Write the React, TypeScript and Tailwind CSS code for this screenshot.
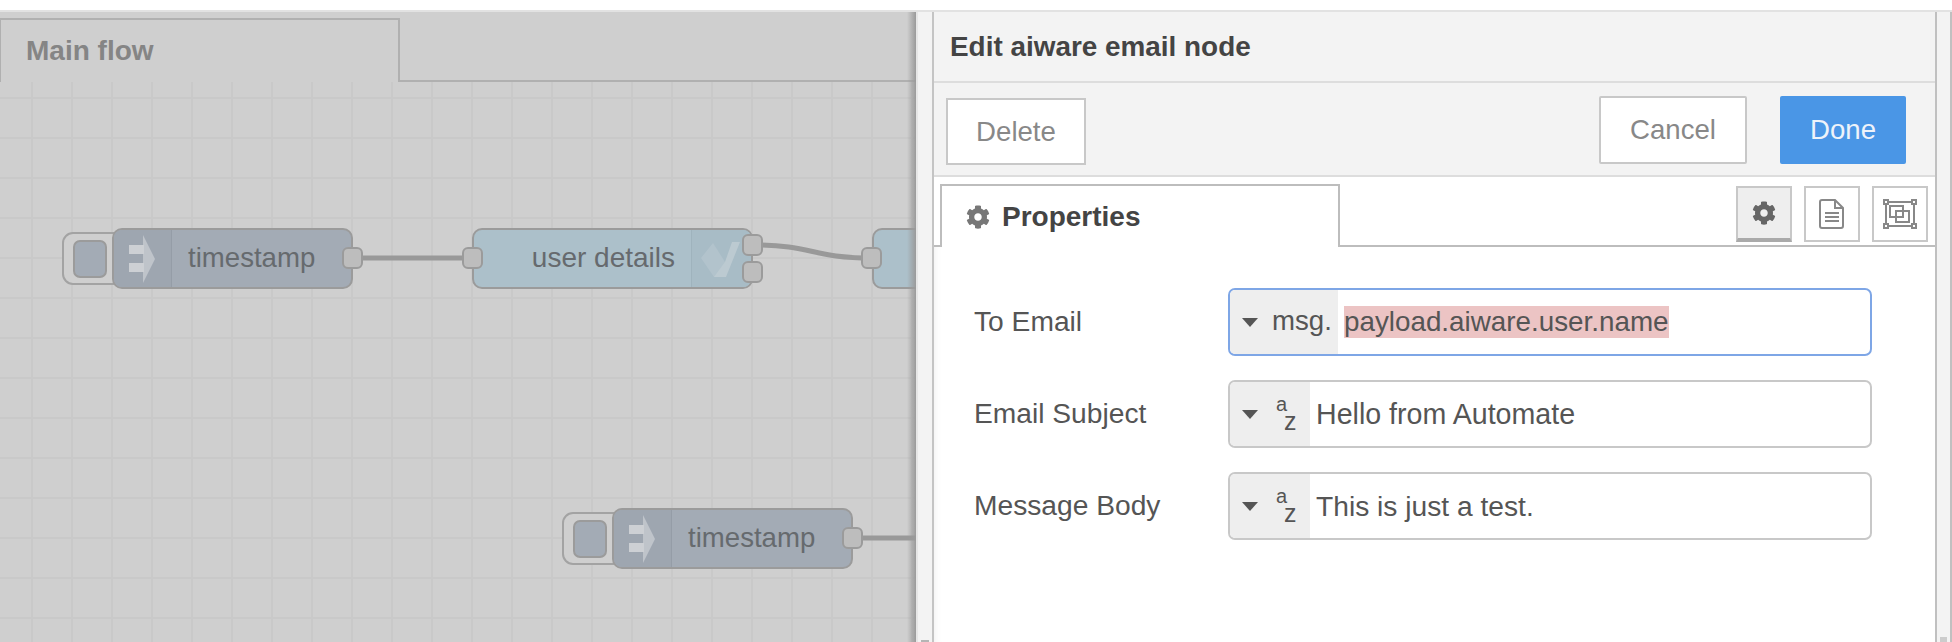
import { FaCog } from "react-icons/fa";

const font = "font-['Liberation_Sans',Arial,sans-serif]";

function InjectIcon() {
  return (
    <svg width="26" height="48" viewBox="0 0 26 48" className="block">
      <path d="M14 0l12 24-12 24z" fill="#bfc4ca" />
      <path d="M0 10h15v9H0zM0 28h15v9H0z" fill="#cdd0d4" />
    </svg>
  );
}

function Port({ className }: { className: string }) {
  return <div className={`absolute w-[21px] h-[22px] rounded-[6px] bg-[#bdbdbd] border-2 border-[#9b9b9b] ${className}`} />;
}

// Inject node with the little button on its left
function TimestampNode({ className }: { className: string }) {
  return (
    <div className={`absolute w-[300px] h-[61px] ${className}`}>
      <div className="absolute left-0 top-[4px] w-[60px] h-[53px] rounded-l-[11px] border-2 border-[#a3a3a3] bg-[#cfcfcf] flex items-center pl-[9px]">
        <div className="w-[34px] h-[38px] rounded-[7px] border-2 border-[#9b9b9b] bg-[#a3abb5]" />
      </div>
      <div className="absolute left-[50px] top-0 w-[241px] h-[61px] rounded-[10px] border-2 border-[#9b9b9b] bg-[#a3abb5] flex overflow-hidden">
        <div className="w-[58px] shrink-0 bg-[#9ea6b0] border-r border-[#959da7] flex items-center pl-[15px]">
          <InjectIcon />
        </div>
        <div className="flex-1 pl-[16px] leading-[56px] text-[27.6px] text-[#666a6e]">timestamp</div>
      </div>
      <Port className="left-[280px] top-[19px]" />
    </div>
  );
}

function TypedInput({ type, value, focused, size }: { type: string; value: string; focused?: boolean; size: string }) {
  return (
    <div className={`flex h-[68px] w-[644px] rounded-[7px] border-2 overflow-hidden bg-white ${focused ? "border-[#7ea6e6]" : "border-[#c8c8c8]"}`}>
      <div className={`flex items-center bg-[#eeeeee] shrink-0 pl-[12px] ${type === "msg" ? "w-[108px]" : "w-[80px]"}`}>
        <div className="w-0 h-0 border-x-[8px] border-x-transparent border-t-[9px] border-t-[#555555]" />
        {type === "msg" ? (
          <span className="ml-[14px] text-[27.6px] text-[#555555] -mt-[2px]">msg.</span>
        ) : (
          <span className="relative ml-[18px] w-[22px] h-[40px] text-[#555555] text-[20px] leading-none">
            <span className="absolute left-0 top-0">a</span>
            <span className="absolute left-[8px] top-[15px] text-[25px]">z</span>
          </span>
        )}
      </div>
      <div className={`flex items-center pl-[6px] text-[#555555] ${size}`}>
        {focused ? <span className="bg-[#ecc4c4] h-[32px] leading-[32px]">{value}</span> : <span>{value}</span>}
      </div>
    </div>
  );
}

function FormRow({ label, children }: { label: string; children: React.ReactNode }) {
  return (
    <div className="flex items-center">
      <div className="w-[294px] pl-[40px] text-[28.2px] text-[#555555] -mt-[2px]">{label}</div>
      {children}
    </div>
  );
}

export default function App() {
  return (
    <div className={`w-[1952px] h-[642px] overflow-hidden bg-white ${font}`}>
      <div className="h-[10px]" />
      <div className="flex h-[632px] border-t-2 border-[#e2e2e2]">
        {/* workspace */}
        <div className="relative w-[916px] shrink-0 overflow-hidden bg-[#cfcfcf]">
          <div className="h-[70px] pt-[6px] flex border-b-2 border-[#b0b0b0]">
            <div className="w-[400px] h-[64px] -mb-[2px] pl-[25px] border-2 border-b-0 border-l border-[#b0b0b0] bg-[#cfcfcf] text-[28px] font-bold text-[#858585] leading-[62px] relative z-10">
              Main flow
            </div>
          </div>
          <div className="relative h-[560px] bg-[linear-gradient(to_right,#c9c9c9_2px,transparent_2px),linear-gradient(to_bottom,#c9c9c9_2px,transparent_2px)] bg-[size:40px_40px] bg-[position:31px_15px]">
            <svg className="absolute left-0 top-0" width="916" height="560" fill="none" stroke="#999999" strokeWidth="5">
              <path d="M352 176H472" />
              <path d="M752 163C815 163 810 176 872 176" />
              <path d="M852 456H916" />
            </svg>
            {/* user details node */}
            <div className="absolute left-[472px] top-[146px] w-[281px] h-[61px] rounded-[10px] border-2 border-[#9b9b9b] bg-[#acc0ca] flex overflow-hidden">
              <div className="flex-1 text-right pr-[16px] leading-[56px] text-[28px] text-[#666a6e]">user details</div>
              <div className="relative w-[60px] shrink-0 bg-[#a8bcc6] border-l border-[#9fb3bd]">
                <svg width="40" height="40" viewBox="0 0 40 40" className="absolute left-[8px] top-[8px]">
                  <path d="M1 20L13 5l12 19v15H14z" fill="#b2c3cc" />
                  <path d="M25 24l7-20h8L26 39H14z" fill="#bccad1" />
                </svg>
              </div>
            </div>
            <div className="absolute left-[872px] top-[146px] w-[100px] h-[61px] rounded-[10px] border-2 border-[#9b9b9b] bg-[#acc0ca]" />
            <TimestampNode className="left-[62px] top-[146px]" />
            <TimestampNode className="left-[562px] top-[426px]" />
            <Port className="left-[462px] top-[165px]" />
            <Port className="left-[742px] top-[152px]" />
            <Port className="left-[742px] top-[179px]" />
            <Port className="left-[861px] top-[165px]" />
            <div className="absolute right-0 top-0 bottom-0 w-[9px] bg-gradient-to-r from-transparent to-[#9a9a9a]" />
          </div>
          <div className="absolute right-0 top-0 h-[70px] w-[9px] z-20 bg-gradient-to-r from-transparent to-[#9a9a9a]" />
        </div>

        {/* left resize strip */}
        <div className="relative w-[18px] shrink-0 bg-[#f3f3f3] border-l-2 border-r-2 border-l-[#e6e6e6] border-r-[#c4c4c4]">
          <div className="absolute left-[3px] bottom-0 w-[8px] h-[2px] bg-[#b5b5b5]" />
        </div>

        {/* edit dialog */}
        <div className="w-[1001px] shrink-0 flex flex-col">
          <div className="h-[71px] shrink-0 bg-[#f3f3f3] border-b-2 border-[#dddddd] pl-[16px] flex items-center text-[27.9px] font-bold text-[#444444]">
            Edit aiware email node
          </div>
          <div className="h-[94px] shrink-0 bg-[#f3f3f3] border-b-2 border-[#dddddd] flex items-start justify-between pl-[12px] pr-[29px]">
            <button className="mt-[15px] w-[140px] h-[67px] bg-white border-2 border-[#c8c8c8] text-[#888888] text-[27.6px]">Delete</button>
            <div className="flex mt-[13px] gap-[33px]">
              <button className="w-[148px] h-[68px] bg-white border-2 border-[#c8c8c8] rounded-[2px] text-[#888888] text-[27.6px]">Cancel</button>
              <button className="w-[126px] h-[68px] bg-[#4a96e6] rounded-[2px] text-[#eef3fa] text-[27.6px]">Done</button>
            </div>
          </div>
          <div className="relative h-[70px] shrink-0 border-b-2 border-[#bdbdbd] flex justify-between">
            <div className="ml-[6px] mt-[7px] w-[400px] h-[63px] bg-white border-2 border-b-0 border-[#bdbdbd] flex items-center pl-[24px] gap-[12px] text-[28px] font-bold text-[#444444] relative z-10 -mb-[2px]">
              <FaCog className="text-[#777777] w-[24px] h-[24px]" />
              Properties
            </div>
            <div className="flex gap-[12px] mt-[9px] pr-[7px] h-[56px]">
              <div className="w-[56px] h-[56px] bg-[#eeeeee] border-2 border-b-[4px] border-[#c8c8c8] border-b-[#aaaaaa] flex items-center justify-center">
                <FaCog className="text-[#666666] w-[24px] h-[24px]" />
              </div>
              <div className="w-[56px] h-[56px] border-2 border-[#c8c8c8] flex items-center justify-center">
                <svg width="26" height="30" viewBox="0 0 26 30" fill="none" stroke="#888888" strokeWidth="2">
                  <path d="M3 1h13l8 8v18a2 2 0 0 1-2 2H3a2 2 0 0 1-2-2V3a2 2 0 0 1 2-2z" />
                  <path d="M16 1v8h8M6 14h14M6 18h14M6 22h14" />
                </svg>
              </div>
              <div className="w-[56px] h-[56px] border-2 border-[#c8c8c8] flex items-center justify-center">
                <svg width="34" height="30" viewBox="0 0 34 30" fill="none" stroke="#888888" strokeWidth="2">
                  <rect x="3" y="3" width="28" height="24" />
                  <rect x="1" y="1" width="4" height="4" fill="#ffffff" />
                  <rect x="29" y="1" width="4" height="4" fill="#ffffff" />
                  <rect x="1" y="25" width="4" height="4" fill="#ffffff" />
                  <rect x="29" y="25" width="4" height="4" fill="#ffffff" />
                  <rect x="7" y="7" width="13" height="11" />
                  <rect x="13" y="12" width="13" height="11" />
                </svg>
              </div>
            </div>
          </div>
          <div className="flex-1 bg-white pt-[41px] flex flex-col gap-[24px] shadow-[inset_8px_0_8px_-8px_rgba(0,0,0,0.08)]">
            <FormRow label="To Email">
              <TypedInput type="msg" value="payload.aiware.user.name" focused size="text-[27.8px]" />
            </FormRow>
            <FormRow label="Email Subject">
              <TypedInput type="str" value="Hello from Automate" size="text-[28.6px]" />
            </FormRow>
            <FormRow label="Message Body">
              <TypedInput type="str" value="This is just a test." size="text-[28.2px]" />
            </FormRow>
          </div>
        </div>

        {/* right resize strip */}
        <div className="relative flex-1 bg-[#f3f3f3] border-l-2 border-r-2 border-[#c0c0c0]">
          <div className="absolute left-[3px] bottom-0 w-[7px] h-[5px] bg-[#cccccc]" />
        </div>
      </div>
    </div>
  );
}
